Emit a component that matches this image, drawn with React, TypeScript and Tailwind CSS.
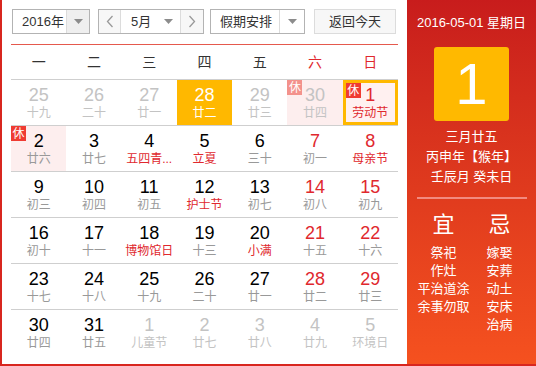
import React from 'react';

type Cell = {
    day: number;
    lunar: string;
    faded?: boolean;
    weekend?: boolean;
    festival?: boolean;
    rest?: boolean;
    selected?: boolean;
    today?: boolean;
};

const rows: Cell[][] = [
    [
        { day: 25, lunar: '十九', faded: true },
        { day: 26, lunar: '二十', faded: true },
        { day: 27, lunar: '廿一', faded: true },
        { day: 28, lunar: '廿二', faded: true, selected: true },
        { day: 29, lunar: '廿三', faded: true },
        { day: 30, lunar: '廿四', faded: true, rest: true },
        { day: 1, lunar: '劳动节', weekend: true, festival: true, rest: true, today: true },
    ],
    [
        { day: 2, lunar: '廿六', rest: true },
        { day: 3, lunar: '廿七' },
        { day: 4, lunar: '五四青...', festival: true },
        { day: 5, lunar: '立夏', festival: true },
        { day: 6, lunar: '三十' },
        { day: 7, lunar: '初一', weekend: true },
        { day: 8, lunar: '母亲节', weekend: true, festival: true },
    ],
    [
        { day: 9, lunar: '初三' },
        { day: 10, lunar: '初四' },
        { day: 11, lunar: '初五' },
        { day: 12, lunar: '护士节', festival: true },
        { day: 13, lunar: '初七' },
        { day: 14, lunar: '初八', weekend: true },
        { day: 15, lunar: '初九', weekend: true },
    ],
    [
        { day: 16, lunar: '初十' },
        { day: 17, lunar: '十一' },
        { day: 18, lunar: '博物馆日', festival: true },
        { day: 19, lunar: '十三' },
        { day: 20, lunar: '小满', festival: true },
        { day: 21, lunar: '十五', weekend: true },
        { day: 22, lunar: '十六', weekend: true },
    ],
    [
        { day: 23, lunar: '十七' },
        { day: 24, lunar: '十八' },
        { day: 25, lunar: '十九' },
        { day: 26, lunar: '二十' },
        { day: 27, lunar: '廿一' },
        { day: 28, lunar: '廿二', weekend: true },
        { day: 29, lunar: '廿三', weekend: true },
    ],
    [
        { day: 30, lunar: '廿四' },
        { day: 31, lunar: '廿五' },
        { day: 1, lunar: '儿童节', faded: true },
        { day: 2, lunar: '廿七', faded: true },
        { day: 3, lunar: '廿八', faded: true },
        { day: 4, lunar: '廿九', faded: true },
        { day: 5, lunar: '环境日', faded: true },
    ],
];

const weekdays = ['一', '二', '三', '四', '五', '六', '日'];

const Caret = () => (
    <svg width="9" height="5" viewBox="0 0 9 5">
        <path d="M0 0 L9 0 L4.5 5 Z" fill="#8c8c8c" />
    </svg>
);

const Chevron = ({ dir }: { dir: 'left' | 'right' }) => (
    <svg width="8" height="13" viewBox="0 0 8 13">
        <polyline
            points={dir === 'left' ? '6.5,1 1.5,6.5 6.5,12' : '1.5,1 6.5,6.5 1.5,12'}
            fill="none"
            stroke="#999"
            strokeWidth="1.3"
        />
    </svg>
);

const DayCell: React.FC<{ cell: Cell }> = ({ cell }) => {
    let bg = '';
    if (cell.selected) bg = 'bg-[#ffb800]';
    else if (cell.today) bg = 'bg-[#fff0f0] border-[3px] border-[#ffb800]';
    else if (cell.rest) bg = 'bg-[#fdeeee]';

    let numColor = 'text-black';
    let lunarColor = 'text-[#999]';
    if (cell.selected) {
        numColor = 'text-white';
        lunarColor = 'text-white';
    } else if (cell.faded) {
        numColor = 'text-[#c3c3c3]';
        lunarColor = 'text-[#c3c3c3]';
    } else {
        if (cell.weekend) numColor = 'text-[#e0282e]';
        if (cell.festival) lunarColor = 'text-[#e0282e]';
    }

    return (
        <div className={`relative h-full flex flex-col items-center ${bg} ${cell.today ? 'pt-[2px]' : 'pt-[5px]'}`}>
            {cell.rest && (
                <div
                    className={`absolute top-0 left-0 w-[15px] h-[15px] flex items-center justify-center text-[12px] leading-none text-white ${
                        cell.faded ? 'bg-[#f3928c]' : 'bg-[#ef3b32]'
                    }`}
                >
                    休
                </div>
            )}
            <div className={`text-[18px] leading-[20px] ${numColor}`}>{cell.day}</div>
            <div className={`mt-[1px] text-[12px] leading-[14px] whitespace-nowrap ${lunarColor}`}>{cell.lunar}</div>
        </div>
    );
};

const App: React.FC = () => {
    return (
        <div className="w-[536px] h-[366px] flex bg-white border-l-2 border-b-2 border-[#d8261f] font-['Liberation_Sans','Noto_Sans_CJK_SC',sans-serif]">
            <div className="w-[405px] pl-[9px] pr-[9px] pt-[9px]">
                <div className="flex h-[25px] text-[13px] text-[#333] ml-[1px] whitespace-nowrap">
                    <div className="w-[78px] flex border border-[#b3b3b3] bg-white">
                        <div className="flex-1 flex items-center pl-[9px]">2016年</div>
                        <div className="w-[23px] flex items-center justify-center bg-[#efefef] border-l border-[#dcdcdc]">
                            <Caret />
                        </div>
                    </div>
                    <div className="ml-[8px] w-[106px] flex border border-[#b3b3b3] bg-white">
                        <div className="w-[22px] flex items-center justify-center bg-[#f7f7f7] border-r border-[#dcdcdc]">
                            <Chevron dir="left" />
                        </div>
                        <div className="flex-1 flex items-center justify-between pl-[10px] pr-[7px]">
                            <span>5月</span>
                            <Caret />
                        </div>
                        <div className="w-[23px] flex items-center justify-center bg-[#f7f7f7] border-l border-[#dcdcdc]">
                            <Chevron dir="right" />
                        </div>
                    </div>
                    <div className="ml-[6px] w-[95px] flex border border-[#b3b3b3] bg-white">
                        <div className="flex-1 flex items-center pl-[9px]">假期安排</div>
                        <div className="w-[25px] flex items-center justify-center border-l border-[#dcdcdc]">
                            <Caret />
                        </div>
                    </div>
                    <button className="ml-[9px] w-[82px] flex items-center justify-center border border-[#dcdcdc] bg-[#f7f7f7] text-[#333]">
                        返回今天
                    </button>
                </div>

                <div className="mt-[10px] h-px bg-[#e5594d]" />

                <div className="grid grid-cols-7 h-[35px] border-b border-[#cfcfcf] text-[14px]">
                    {weekdays.map((w, i) => (
                        <div key={w} className={`flex items-center justify-center ${i >= 5 ? 'text-[#e0282e]' : 'text-[#333]'}`}>
                            {w}
                        </div>
                    ))}
                </div>

                {rows.map((row, ri) => (
                    <div
                        key={ri}
                        className={`grid grid-cols-7 h-[46px] ${ri < rows.length - 1 ? 'border-b border-[#cfcfcf]' : ''}`}
                    >
                        {row.map((cell, ci) => (
                            <DayCell key={ci} cell={cell} />
                        ))}
                    </div>
                ))}
            </div>

            <div className="flex-1 flex flex-col items-center pt-[13px] text-white bg-gradient-to-b from-[#c81c1c] to-[#f5511f]">
                <div className="text-[13px] leading-[20px] whitespace-nowrap">2016-05-01 星期日</div>
                <div className="mt-[14px] w-[75px] h-[74px] rounded-[3px] bg-[#ffb900] flex items-center justify-center text-[58px] leading-none">
                    1
                </div>
                <div className="mt-[6px] text-[13px] leading-[20px] text-center whitespace-nowrap">
                    <div>三月廿五</div>
                    <div>丙申年【猴年】</div>
                    <div>壬辰月 癸未日</div>
                </div>
                <div className="mt-[10px] w-[110px] h-[2px] bg-[#f28a80]" />
                <div className="mt-[13px] flex">
                    <div className="w-[56px] flex flex-col items-center">
                        <div className="text-[22px] leading-[26px]">宜</div>
                        <div className="mt-[6px] text-[13px] leading-[18px] text-center whitespace-nowrap">
                            <div>祭祀</div>
                            <div>作灶</div>
                            <div>平治道涂</div>
                            <div>余事勿取</div>
                        </div>
                    </div>
                    <div className="w-[56px] flex flex-col items-center">
                        <div className="text-[22px] leading-[26px]">忌</div>
                        <div className="mt-[6px] text-[13px] leading-[18px] text-center whitespace-nowrap">
                            <div>嫁娶</div>
                            <div>安葬</div>
                            <div>动土</div>
                            <div>安床</div>
                            <div>治病</div>
                        </div>
                    </div>
                </div>
            </div>
        </div>
    );
};

export default App;
